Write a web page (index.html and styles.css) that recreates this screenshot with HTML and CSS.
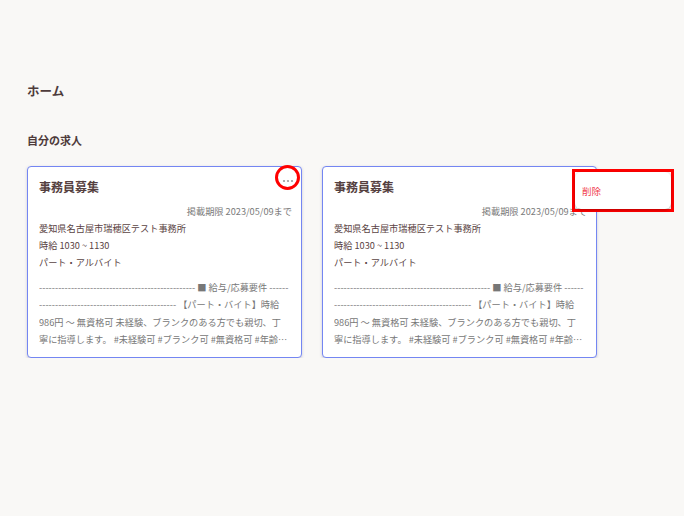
FILE: index.html
```html
<!DOCTYPE html>
<html lang="ja">
<head>
<meta charset="utf-8">
<title>ホーム</title>
<link rel="stylesheet" href="styles.css">
</head>
<body>
<main class="page">
  <h1 class="page-title">ホーム</h1>
  <h2 class="section-title">自分の求人</h2>
  <div class="cards">
    <article class="card">
      <div class="card-head">
        <h3 class="card-title">事務員募集</h3>
      </div>
      <button class="more" type="button" aria-label="メニュー">
        <svg class="dots" width="12" height="4" viewBox="0 0 12 4"><circle cx="2" cy="2" r="1.1"/><circle cx="6" cy="2" r="1.1"/><circle cx="10" cy="2" r="1.1"/></svg>
      </button>
      <span class="mark-circle"></span>
      <p class="deadline">掲載期限 2023/05/09まで</p>
      <p class="info">愛知県名古屋市瑞穂区テスト事務所</p>
      <p class="info">時給 1030 ~ 1130</p>
      <p class="info">パート・アルバイト</p>
      <p class="desc">------------------------------------------------- ■ 給与/応募要件 ------------------------------------------------- 【パート・バイト】時給 <span class="nowrap">986円</span> 〜 無資格可 未経験、ブランクのある方でも親切、丁寧に指導します。 #未経験可 #ブランク可 #無資格可 #年齢不問 #主婦・主夫歓迎</p>
    </article>
    <article class="card">
      <div class="card-head">
        <h3 class="card-title">事務員募集</h3>
      </div>
      <button class="more" type="button" aria-label="メニュー">
        <svg class="dots" width="12" height="4" viewBox="0 0 12 4"><circle cx="2" cy="2" r="1.1"/><circle cx="6" cy="2" r="1.1"/><circle cx="10" cy="2" r="1.1"/></svg>
      </button>
      <p class="deadline">掲載期限 2023/05/09まで</p>
      <p class="info">愛知県名古屋市瑞穂区テスト事務所</p>
      <p class="info">時給 1030 ~ 1130</p>
      <p class="info">パート・アルバイト</p>
      <p class="desc">------------------------------------------------- ■ 給与/応募要件 ------------------------------------------------- 【パート・バイト】時給 <span class="nowrap">986円</span> 〜 無資格可 未経験、ブランクのある方でも親切、丁寧に指導します。 #未経験可 #ブランク可 #無資格可 #年齢不問 #主婦・主夫歓迎</p>
      <div class="menu-mark">
        <div class="menu">
          <button class="menu-item" type="button">削除</button>
        </div>
      </div>
    </article>
  </div>
</main>
</body>
</html>
```

FILE: styles.css
```css
html, body {
  margin: 0;
  padding: 0;
  background: #f9f8f6;
}

body {
  font-family: "Noto Sans CJK JP", "Noto Sans", sans-serif;
  color: #5a4343;
}

.page {
  padding: 81px 27px 0 27px;
}

.page-title {
  margin: 0;
  font-size: 12.5px;
  line-height: 20px;
  font-weight: 700;
  color: #4e3b3b;
}

.section-title {
  margin: 30px 0 0 0;
  font-size: 11px;
  line-height: 18px;
  font-weight: 700;
  color: #4e3b3b;
}

.cards {
  margin-top: 17px;
  display: flex;
  gap: 20px;
}

.card {
  position: relative;
  box-sizing: border-box;
  width: 275px;
  height: 192px;
  background: #ffffff;
  border: 1px solid #7486f2;
  border-radius: 4px;
  box-shadow: 0 1px 3px rgba(60, 60, 120, 0.25);
  padding: 10px 9px 8px 11px;
}

.card-head {
  display: flex;
  align-items: center;
  justify-content: space-between;
}

.card-title {
  margin: 0;
  font-size: 12px;
  line-height: 20px;
  font-weight: 700;
  color: #553f3f;
}

.more {
  position: absolute;
  top: 3px;
  right: 2px;
  width: 22px;
  height: 22px;
  padding: 0;
  border: none;
  background: transparent;
  display: flex;
  align-items: center;
  justify-content: center;
}

.dots {
  display: block;
  fill: #9b9b9b;
}

.mark-circle {
  position: absolute;
  top: -2px;
  right: 1px;
  width: 19px;
  height: 19px;
  border: 3px solid #ff0000;
  border-radius: 50%;
}

.deadline {
  margin: 6px 0 0 0;
  font-size: 9.2px;
  line-height: 17px;
  text-align: right;
  color: #7a7a7a;
}

.info {
  margin: 0;
  font-size: 9.2px;
  line-height: 17px;
  color: #5a4343;
}

.desc {
  margin: 8px 3px 0 0;
  font-size: 9.2px;
  line-height: 17.4px;
  color: #777777;
  word-break: break-all;
  display: -webkit-box;
  -webkit-line-clamp: 4;
  -webkit-box-orient: vertical;
  overflow: hidden;
}

.nowrap {
  white-space: nowrap;
}

.menu-mark {
  position: absolute;
  top: 2px;
  left: 249px;
  width: 96px;
  height: 37px;
  border: 3px solid #ff0000;
}

.menu {
  box-sizing: border-box;
  width: 100%;
  height: 100%;
  background: #ffffff;
  border-radius: 6px;
  box-shadow: 0 1px 3px rgba(0, 0, 0, 0.3);
  display: flex;
  align-items: center;
  padding-left: 7px;
}

.menu-item {
  padding: 0;
  border: none;
  background: transparent;
  font-family: inherit;
  font-size: 9.5px;
  color: #f03c4c;
  cursor: pointer;
}
```
